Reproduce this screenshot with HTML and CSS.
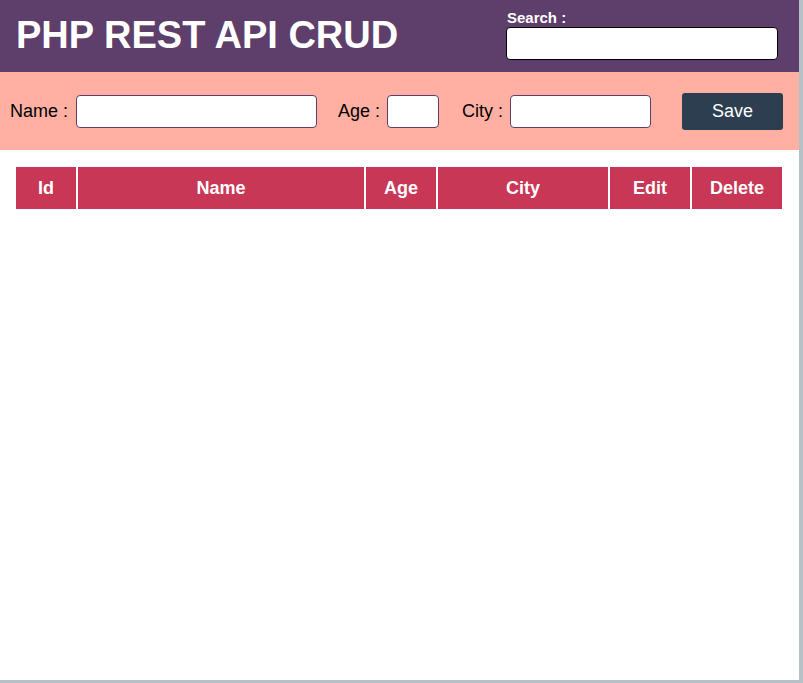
FILE: index.html
```html
<!DOCTYPE html>
<html>
<head>
<meta charset="utf-8">
<title>PHP REST API CRUD</title>
<link rel="stylesheet" href="styles.css">
</head>
<body>
<div class="page">
  <header class="header">
    <h1 class="title">PHP REST API CRUD</h1>
    <div class="search">
      <label class="search-label">Search :</label>
      <input class="search-input" type="text">
    </div>
  </header>
  <form class="form-bar">
    <label class="lbl lbl-name">Name :</label>
    <input class="inp inp-name" type="text">
    <label class="lbl lbl-age">Age :</label>
    <input class="inp inp-age" type="text">
    <label class="lbl lbl-city">City :</label>
    <input class="inp inp-city" type="text">
    <button class="save" type="button">Save</button>
  </form>
  <table class="grid">
    <thead>
      <tr>
        <th class="c-id">Id</th>
        <th class="c-name">Name</th>
        <th class="c-age">Age</th>
        <th class="c-city">City</th>
        <th class="c-edit">Edit</th>
        <th class="c-del">Delete</th>
      </tr>
    </thead>
    <tbody></tbody>
  </table>
</div>
</body>
</html>
```
FILE: styles.css
```css
html, body {
  margin: 0;
  padding: 0;
  background: #b5c0c7;
  font-family: "Liberation Sans", Arial, sans-serif;
}
.page {
  width: 799px;
  height: 680px;
  background: #ffffff;
  overflow: hidden;
}
.header {
  height: 72px;
  background: #5e3f6b;
  display: flex;
  justify-content: space-between;
  align-items: flex-start;
  padding: 0 21px 0 16px;
  box-sizing: border-box;
}
.title {
  margin: 0;
  padding-top: 13px;
  color: #ffffff;
  font-size: 38px;
  font-weight: bold;
  line-height: 44px;
}
.search {
  display: flex;
  flex-direction: column;
  padding-top: 8px;
}
.search-label {
  color: #ffffff;
  font-size: 15px;
  font-weight: bold;
  line-height: 19px;
  padding-left: 1px;
}
.search-input {
  width: 272px;
  height: 33px;
  box-sizing: border-box;
  border: 1px solid #000000;
  border-radius: 4px;
  background: #ffffff;
  margin: 0;
}
.form-bar {
  height: 78px;
  margin: 0;
  background: #ffb0a3;
  display: flex;
  align-items: center;
  padding-left: 10px;
  box-sizing: border-box;
}
.lbl {
  font-size: 18px;
  color: #000000;
}
.lbl-name { margin-right: 8px; }
.lbl-age { margin-left: 21px; margin-right: 7px; }
.lbl-city { margin-left: 23px; margin-right: 7px; }
.inp {
  height: 33px;
  box-sizing: border-box;
  border: 1px solid #5e3f6b;
  border-radius: 4px;
  background: #ffffff;
  margin: 0;
}
.inp-name { width: 241px; }
.inp-age { width: 52px; }
.inp-city { width: 141px; }
.save {
  margin-left: 31px;
  width: 101px;
  height: 37px;
  border: none;
  border-radius: 3px;
  background: #2c3e50;
  color: #ffffff;
  font-family: "Liberation Sans", Arial, sans-serif;
  font-size: 18px;
}
.grid {
  margin: 15px 0 0 14px;
  border-collapse: separate;
  border-spacing: 2px 2px;
  table-layout: fixed;
  width: 770px;
}
.grid th {
  height: 42px;
  padding: 0;
  background: #c83755;
  color: #ffffff;
  font-size: 18px;
  font-weight: bold;
  text-align: center;
}
.c-id { width: 60px; }
.c-name { width: 286px; }
.c-age { width: 70px; }
.c-city { width: 170px; }
.c-edit { width: 80px; }
.c-del { width: 90px; }
```
